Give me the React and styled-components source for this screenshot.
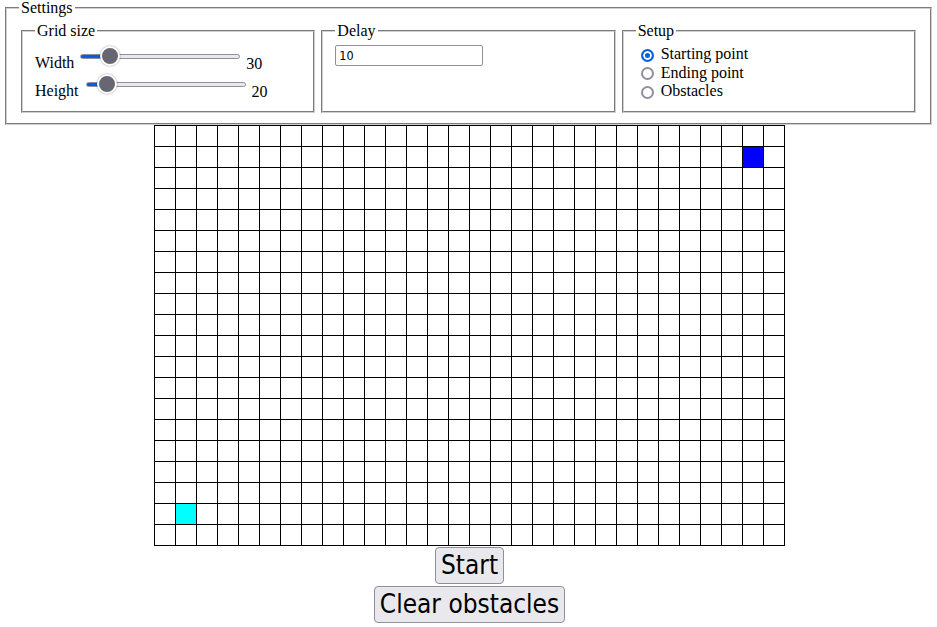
import { useState } from "react";
import styled, { createGlobalStyle } from "styled-components";

const COLS = 30;
const ROWS = 20;
const START = { x: 1, y: 18 };
const END = { x: 28, y: 1 };

const GlobalStyle = createGlobalStyle`
  body {
    margin: 0;
    font-family: "Liberation Serif", "Times New Roman", serif;
    font-size: 16px;
    color: #000;
    background: #fff;
  }
`;

const Settings = styled.fieldset`
  margin: -1px 5px 0;
  padding: 0.35em 0.75em 0.625em;
  border: 2px groove #d0d0d0;
  min-width: 0;
`;

const Legend = styled.legend`
  padding: 0 2px;
`;

const Panels = styled.div`
  display: flex;
  gap: 2px;
  margin-top: -1px;
`;

const Panel = styled.fieldset`
  flex: 1 1 0;
  min-width: 0;
  margin: 0 2px;
  padding: 0.35em 0.75em 0.625em;
  border: 2px groove #d0d0d0;
`;

const SliderRow = styled.div`
  display: flex;
  align-items: flex-end;
  height: 28px;
  &:first-of-type {
    margin-top: -1px;
  }
`;

const SliderLabel = styled.span`
  line-height: 18px;
`;

const Slider = styled.input.attrs({ type: "range" })`
  -webkit-appearance: none;
  appearance: none;
  width: 160px;
  height: 20px;
  margin: 0 0 6px ${(p) => p.$offset}px;
  padding: 0;
  background: transparent;

  &::-webkit-slider-runnable-track {
    height: 5px;
    box-sizing: border-box;
    border: 1px solid #8f8f9d;
    border-radius: 3px;
    background: linear-gradient(
      to right,
      #0060df calc(10px + (100% - 20px) * ${(p) => p.$ratio}),
      #e9e9ed 0
    );
  }

  &::-webkit-slider-thumb {
    -webkit-appearance: none;
    box-sizing: border-box;
    width: 20px;
    height: 20px;
    margin-top: -8.5px;
    border: 2px solid #fff;
    border-radius: 50%;
    background: #676774;
    box-shadow: 0 0 2px rgba(0, 0, 0, 0.45);
  }
`;

const SliderValue = styled.span`
  line-height: 18px;
  margin-left: 6px;
  margin-bottom: -1px;
`;

const DelayInput = styled.input`
  box-sizing: border-box;
  display: block;
  width: 148px;
  height: 21px;
  margin: 0;
  padding: 1px 3px;
  border: 1px solid #8f8f9d;
  border-radius: 2px;
  font-family: "DejaVu Sans Condensed", "Liberation Sans", sans-serif;
  font-size: 12.5px;
  color: #000;
`;

const RadioList = styled.div`
  display: flex;
  flex-direction: column;
`;

const RadioLabel = styled.label`
  display: flex;
  align-items: center;
  height: 18.5px;
`;

const Radio = styled.input.attrs({ type: "radio" })`
  -webkit-appearance: none;
  appearance: none;
  box-sizing: border-box;
  width: 13px;
  height: 13px;
  margin: 2px 7px 0 5px;
  border: 2px solid #8f8f9d;
  border-radius: 50%;
  background: #fff;

  &:checked {
    border-color: #0060df;
    background: #0060df;
    box-shadow: inset 0 0 0 2px #fff;
  }
`;

const Main = styled.main`
  padding-left: 2px;
`;

const Board = styled.table`
  border-collapse: collapse;
  margin: 0 auto;
`;

const Cell = styled.td`
  width: 20px;
  height: 20px;
  padding: 0;
  border: 1px solid #000;
  background: ${(p) => p.$color || "#fff"};
`;

const Actions = styled.div`
  display: flex;
  flex-direction: column;
  align-items: center;
  gap: 2px;
  margin-top: 1px;
`;

const Button = styled.button`
  box-sizing: border-box;
  height: 37px;
  padding: 2px 5px;
  border: 1px solid #8f8f9d;
  border-radius: 4px;
  background: #e9e9ed;
  color: #000;
  font-family: "DejaVu Sans Condensed", "DejaVu Sans", sans-serif;
  font-size: 26px;
  line-height: 31px;
`;

const cellColor = (x, y) => {
  if (x === START.x && y === START.y) return "#00ffff";
  if (x === END.x && y === END.y) return "#0000ff";
  return null;
};

export default function App() {
  const [width, setWidth] = useState(30);
  const [height, setHeight] = useState(20);
  const [delay, setDelay] = useState("10");
  const [mode, setMode] = useState("start");

  const modes = [
    ["start", "Starting point"],
    ["end", "Ending point"],
    ["obstacles", "Obstacles"],
  ];

  return (
    <>
      <GlobalStyle />
      <Settings>
        <Legend>Settings</Legend>
        <Panels>
          <Panel>
            <Legend>Grid size</Legend>
            <SliderRow>
              <SliderLabel>Width</SliderLabel>
              <Slider
                min={10}
                max={160}
                value={width}
                $offset={6}
                $ratio={(width - 10) / 150}
                onChange={(e) => setWidth(+e.target.value)}
              />
              <SliderValue>{width}</SliderValue>
            </SliderRow>
            <SliderRow>
              <SliderLabel>Height</SliderLabel>
              <Slider
                min={10}
                max={140}
                value={height}
                $offset={7}
                $ratio={(height - 10) / 130}
                onChange={(e) => setHeight(+e.target.value)}
              />
              <SliderValue>{height}</SliderValue>
            </SliderRow>
          </Panel>
          <Panel>
            <Legend>Delay</Legend>
            <DelayInput value={delay} onChange={(e) => setDelay(e.target.value)} />
          </Panel>
          <Panel>
            <Legend>Setup</Legend>
            <RadioList>
              {modes.map(([key, label]) => (
                <RadioLabel key={key}>
                  <Radio
                    name="setup"
                    checked={mode === key}
                    onChange={() => setMode(key)}
                  />
                  {label}
                </RadioLabel>
              ))}
            </RadioList>
          </Panel>
        </Panels>
      </Settings>

      <Main>
        <Board>
          <tbody>
            {Array.from({ length: ROWS }, (_, y) => (
              <tr key={y}>
                {Array.from({ length: COLS }, (_, x) => (
                  <Cell key={x} $color={cellColor(x, y)} />
                ))}
              </tr>
            ))}
          </tbody>
        </Board>

        <Actions>
          <Button>Start</Button>
          <Button>Clear obstacles</Button>
        </Actions>
      </Main>
    </>
  );
}
